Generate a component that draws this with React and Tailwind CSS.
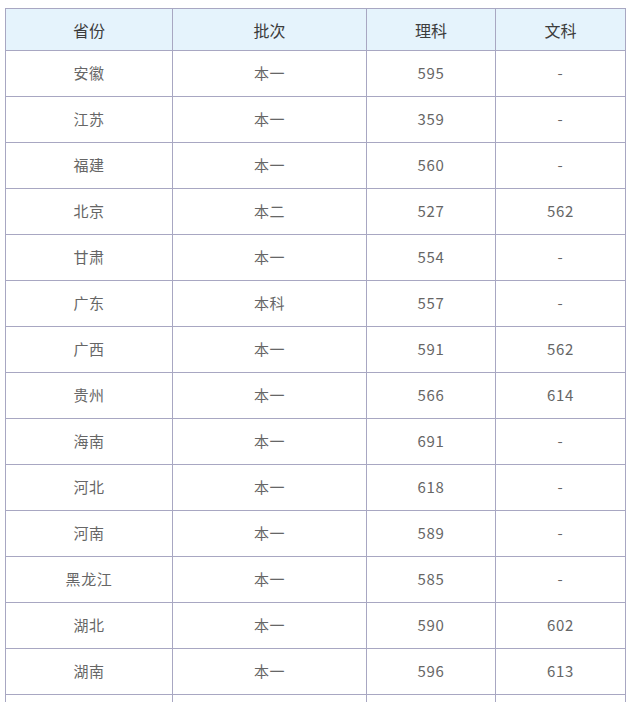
import React from "react";

const rows = [
  ["安徽", "本一", "595", "-"],
  ["江苏", "本一", "359", "-"],
  ["福建", "本一", "560", "-"],
  ["北京", "本二", "527", "562"],
  ["甘肃", "本一", "554", "-"],
  ["广东", "本科", "557", "-"],
  ["广西", "本一", "591", "562"],
  ["贵州", "本一", "566", "614"],
  ["海南", "本一", "691", "-"],
  ["河北", "本一", "618", "-"],
  ["河南", "本一", "589", "-"],
  ["黑龙江", "本一", "585", "-"],
  ["湖北", "本一", "590", "602"],
  ["湖南", "本一", "596", "613"],
];

const font = {
  fontFamily: '"Microsoft YaHei", "Noto Sans CJK SC", sans-serif',
};

function App() {
  return (
    <div className="h-[702px] overflow-hidden bg-white pt-[8px] pl-[5px]" style={font}>
      <table className="table-fixed border-collapse w-[620px]">
        <colgroup>
          <col className="w-[167px]" />
          <col className="w-[194px]" />
          <col className="w-[129px]" />
          <col className="w-[130px]" />
        </colgroup>
        <thead>
          <tr className="bg-[#e5f3fc]">
            {["省份", "批次", "理科", "文科"].map((h) => (
              <th
                key={h}
                className="h-[42px] border border-[#a8a7c2] p-0 text-center text-[16px] font-normal text-[#3c3c3c]"
              >
                {h}
              </th>
            ))}
          </tr>
        </thead>
        <tbody>
          {rows.map((r) => (
            <tr key={r[0]}>
              {r.map((c, i) => (
                <td
                  key={i}
                  className="h-[46px] border border-[#a8a7c2] p-0 text-center text-[15px] text-[#666] tracking-[0.6px]"
                >
                  {c}
                </td>
              ))}
            </tr>
          ))}
          {/* next row only shows its top border in the frame */}
          <tr>
            <td className="h-[46px] border border-[#a8a7c2]" />
            <td className="h-[46px] border border-[#a8a7c2]" />
            <td className="h-[46px] border border-[#a8a7c2]" />
            <td className="h-[46px] border border-[#a8a7c2]" />
          </tr>
        </tbody>
      </table>
    </div>
  );
}

export default App;
